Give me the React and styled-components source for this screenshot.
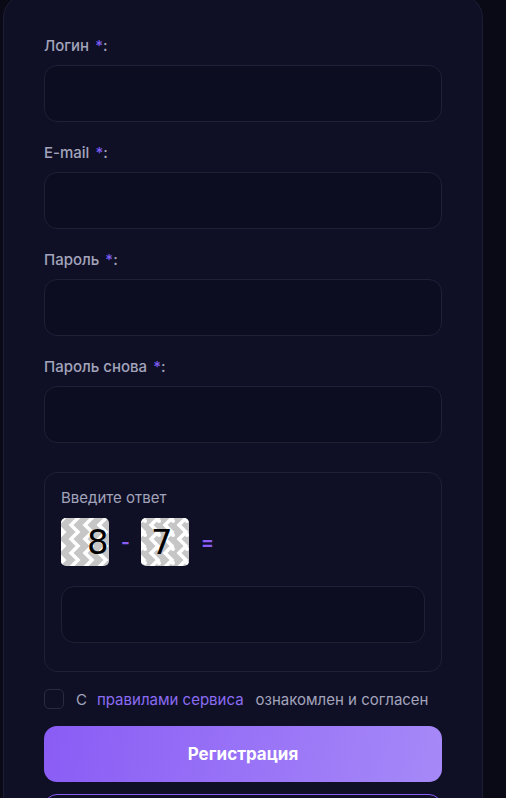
import React from "react";
import styled, { createGlobalStyle } from "styled-components";

const GlobalStyle = createGlobalStyle`
  * { box-sizing: border-box; }
  html, body {
    margin: 0;
    padding: 0;
    background: #0a0a17;
    font-family: Inter, "Noto Sans", sans-serif;
  }
`;

const Page = styled.div`
  width: 506px;
  height: 798px;
  overflow: hidden;
  background: #0a0a17;
`;

const Card = styled.form`
  width: 480px;
  margin: -6px 0 0 3px;
  padding: 42px 40px 40px;
  background: #0f1026;
  border: 1px solid #1d1e33;
  border-radius: 24px;
  display: flex;
  flex-direction: column;
  gap: 22px;
`;

const Field = styled.div`
  display: flex;
  flex-direction: column;
  gap: 10px;
`;

const Label = styled.label`
  font-size: 15px;
  line-height: 18px;
  font-weight: 500;
  color: #a3a4bb;
`;

const Star = styled.span`
  color: #7b5cf0;
  margin-left: 6px;
`;

const Input = styled.input`
  height: 57px;
  width: 100%;
  background: #0c0d20;
  border: 1px solid #1f2036;
  border-radius: 13px;
  outline: none;
  color: #fff;
  font-size: 15px;
  padding: 0 16px;
`;

const CaptchaBox = styled.div`
  margin-top: 7px;
  border: 1px solid #1f2036;
  border-radius: 13px;
  padding: 16px 16px 28px;
  display: flex;
  flex-direction: column;
`;

const CaptchaTitle = styled.div`
  font-size: 15px;
  line-height: 18px;
  color: #a3a4bb;
`;

const Equation = styled.div`
  display: flex;
  align-items: center;
  margin: 11px 0 20px;
`;

const Tile = styled.div`
  position: relative;
  width: 48px;
  height: 48px;
  border-radius: 5px;
  overflow: hidden;
  background: #c6c6c6;
  display: flex;
  align-items: center;
  padding-left: ${(p) => p.$offset}px;
`;

const TileArt = styled.svg`
  position: absolute;
  inset: 0;
`;

const Digit = styled.span`
  position: relative;
  font-family: "DejaVu Sans", "Liberation Sans", sans-serif;
  font-size: 34px;
  line-height: 1;
  color: #000;
`;

const Op = styled.span`
  color: #8b5cf6;
  font-size: 19px;
  font-weight: 700;
  margin: 0 ${(p) => p.$right}px 0 ${(p) => p.$left}px;
`;

const AgreeRow = styled.label`
  display: flex;
  align-items: center;
  margin-top: -5px;
  font-size: 15px;
  color: #a3a4bb;
`;

const Check = styled.span`
  width: 20px;
  height: 20px;
  border: 1px solid #2a2b40;
  border-radius: 5px;
  margin-right: 12px;
`;

const Link = styled.a`
  color: #8b6cf2;
  margin: 0 12px 0 10px;
  text-decoration: none;
`;

const Submit = styled.button`
  margin-top: -5px;
  height: 56px;
  border: none;
  border-radius: 13px;
  background: linear-gradient(100deg, #8a5cf5 0%, #a689f8 100%);
  color: #fff;
  font-family: Inter, sans-serif;
  font-size: 17px;
  font-weight: 700;
`;

const Secondary = styled.button`
  margin-top: -10px;
  height: 56px;
  border: 1.5px solid #8b5cf6;
  border-radius: 13px;
  background: transparent;
`;

function Zigzag({ dots }) {
  const cols = [-4, 10, 24, 38, 52];
  return (
    <TileArt width="48" height="48" viewBox="0 0 48 48">
      {cols.map((x) => {
        const pts = [];
        for (let y = -7; y <= 56; y += 7) {
          pts.push(`${x + (((y + 7) / 7) % 2 === 0 ? 0 : 7)},${y}`);
        }
        return (
          <polyline key={x} points={pts.join(" ")} fill="none" stroke="#fff" strokeWidth="3.5" />
        );
      })}
      {dots &&
        [4, 18, 32, 46].map((x) =>
          [3, 17, 31, 45].map((y) => <circle key={`${x}-${y}`} cx={x} cy={y} r="2" fill="#fff" />)
        )}
    </TileArt>
  );
}

const fields = ["Логин", "E-mail", "Пароль", "Пароль снова"];

export default function App() {
  return (
    <Page>
      <GlobalStyle />
      <Card>
        {fields.map((f) => (
          <Field key={f}>
            <Label>
              {f}
              <Star>*</Star>:
            </Label>
            <Input type={f.startsWith("Пароль") ? "password" : "text"} />
          </Field>
        ))}
        <CaptchaBox>
          <CaptchaTitle>Введите ответ</CaptchaTitle>
          <Equation>
            <Tile $offset={26}>
              <Zigzag />
              <Digit>8</Digit>
            </Tile>
            <Op $left={12} $right={11}>-</Op>
            <Tile $offset={10}>
              <Zigzag dots />
              <Digit>7</Digit>
            </Tile>
            <Op $left={12} $right={0}>=</Op>
          </Equation>
          <Input />
        </CaptchaBox>
        <AgreeRow>
          <Check />
          С<Link href="#">правилами сервиса</Link>ознакомлен и согласен
        </AgreeRow>
        <Submit type="button">Регистрация</Submit>
        <Secondary type="button" />
      </Card>
    </Page>
  );
}
